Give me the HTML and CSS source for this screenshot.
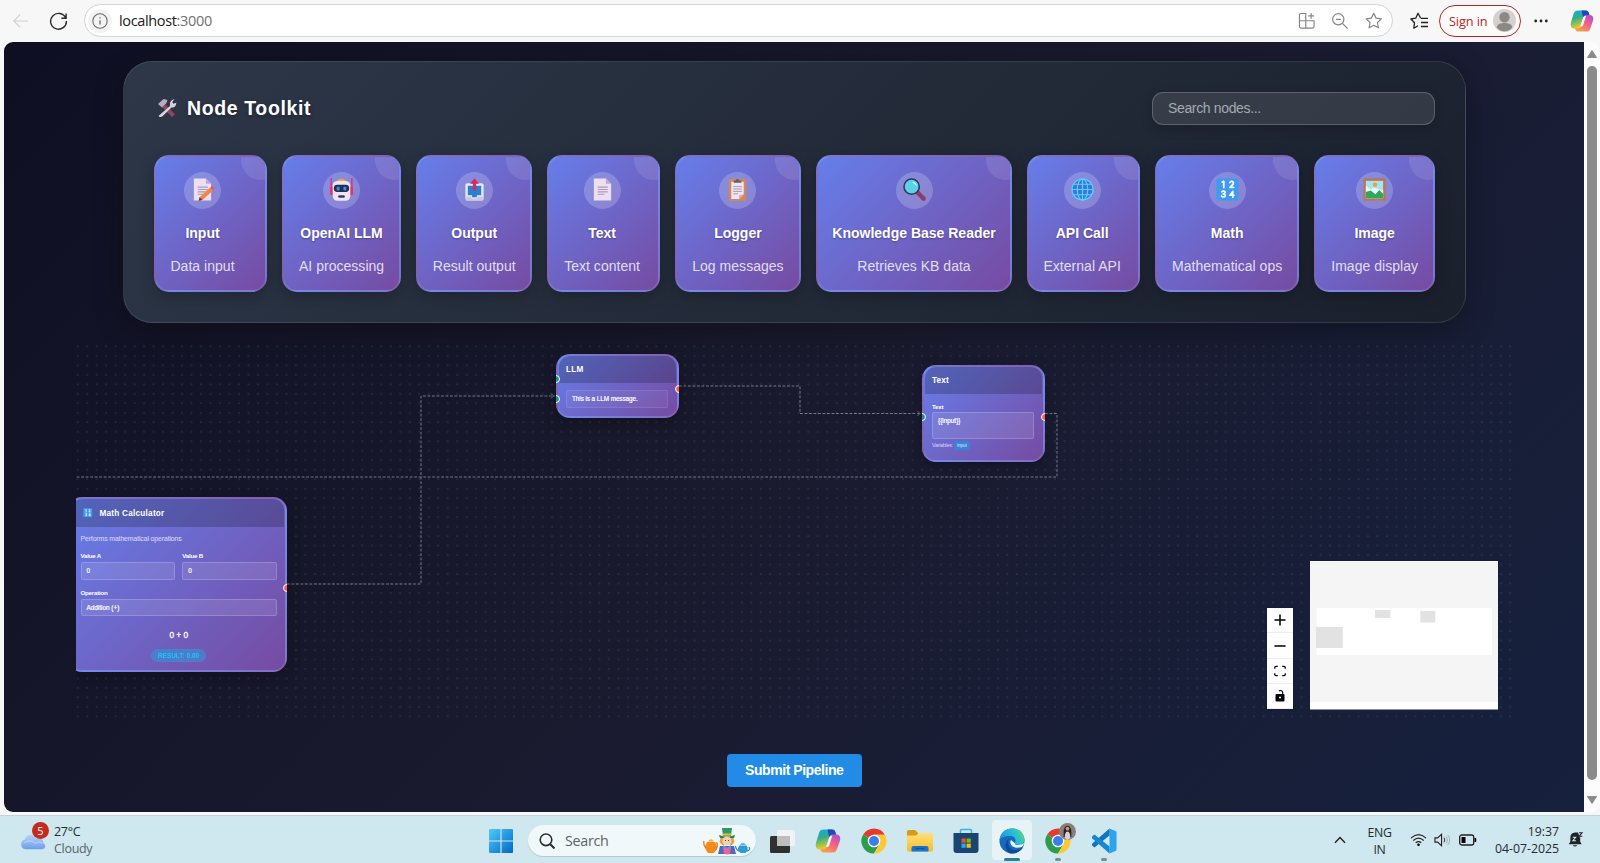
FILE: index.html
```html
<!DOCTYPE html>
<html lang="en">
<head>
<meta charset="utf-8">
<title>Node Toolkit</title>
<link rel="stylesheet" href="styles.css">
</head>
<body>
<svg class="defs" width="0" height="0" aria-hidden="true">
  <defs>
    <linearGradient id="cpA" x1="0" y1="0" x2="0.3" y2="1"><stop offset="0" stop-color="#1aa7e8"/><stop offset=".45" stop-color="#2fae8c"/><stop offset="1" stop-color="#f2cf1d"/></linearGradient>
    <linearGradient id="cpB" x1="1" y1="0" x2="0.4" y2="1"><stop offset="0" stop-color="#a24de0"/><stop offset=".5" stop-color="#ee5d8b"/><stop offset="1" stop-color="#fb9a4b"/></linearGradient>
    <linearGradient id="win" x1="0" y1="0" x2="1" y2="1"><stop offset="0" stop-color="#4fcbf8"/><stop offset="1" stop-color="#0067c5"/></linearGradient>
    <linearGradient id="edgeA" x1="0" y1="0.3" x2="1" y2="0"><stop offset="0" stop-color="#1c9be6"/><stop offset=".6" stop-color="#2cc3cf"/><stop offset="1" stop-color="#6fdc4e"/></linearGradient>
    <linearGradient id="fold" x1="0" y1="0" x2="0" y2="1"><stop offset="0" stop-color="#ffe07a"/><stop offset="1" stop-color="#f7bd2d"/></linearGradient>
    <linearGradient id="cloud" x1="0" y1="0" x2="0" y2="1"><stop offset="0" stop-color="#b9d3fb"/><stop offset="1" stop-color="#6f9ee8"/></linearGradient>
    <symbol id="copilot" viewBox="0 0 26 26">
      <path d="M8.500 1.500H17c2 0 3 1 3.500 3l.8 3h-4c-1.800 0-2.800 1-3.300 2.800L11 19c-.5 1.600-1.400 2.400-3 2.400H5C1.500 21.400.2 18.500 1 15L4 5C4.900 2.500 6 1.500 8.500 1.500z" fill="url(#cpA)"/>
      <path d="M12.500 1.500H17c2 0 3 1 3.500 3l.8 3h-4c-1.500 0-2.400.7-3 2z" fill="#1b49c4"/>
      <path d="M17.500 24.500H9c-2 0-3-1-3.500-3l-.2-.600H8.500c1.800 0 2.500-.8 3-2.400L15 8c.5-1.300 1.400-1.600 3-1.600h3c3.500 0 4.800 2.600 4 6L22 21c-.9 2.500-2 3.500-4.500 3.500z" fill="url(#cpB)"/>
      <path d="M14.300 9.200q.4-1.200 1.500-1.500h1.500l-3 9.500q-.5 1.500-1.700 1.700h-1.400z" fill="#f3f5f8"/>
    </symbol>
    <symbol id="chrome" viewBox="0 0 26 26">
      <path d="M13 13L2.200 6.500A12.500 12.500 0 0 1 23.800 6.700H13z" fill="#e33b2e"/>
      <path d="M13 13l5.500 3.200L13 25.500A12.500 12.500 0 0 1 2.200 6.500z" fill="#2d9c4b"/>
      <path d="M13 6.700h10.800A12.500 12.500 0 0 1 13 25.500l5.500-9.300z" fill="#fcc934"/>
      <circle cx="13" cy="13" r="6.300" fill="#fff"/><circle cx="13" cy="13" r="5" fill="#3b7ded"/>
    </symbol>
    <symbol id="numbers" viewBox="0 0 24 24">
      <rect x=".5" y=".5" width="23" height="23" rx="3" fill="#3d9bf0"/>
      <g fill="none" stroke="#fff" stroke-width="1.800" stroke-linecap="round" stroke-linejoin="round">
        <path d="M6.500 4.500l1.600-1v6.500M14.500 4.800c.5-2 4-1.700 3.700.5-.2 1.600-2.600 3-3.700 4.500h4M6 14.500c1-1.500 3.700-1 3.500.6-.1 1-1 1.400-2 1.400 1.300 0 2.300.6 2.200 1.800-.2 1.800-3 2-3.900.5M17.500 20V14L14.500 18h4.300"/>
      </g>
    </symbol>
    <symbol id="page" viewBox="0 0 24 24">
      <path d="M3 .5h12.500l5.500 5.500V23.500H3z" fill="#ecdff2"/><path d="M15.500.5V6H21z" fill="#bfa9d2"/>
      <path d="M7 9.500h10.500M7 12h10.500M7 14.500h10.500M7 17h7" stroke="#a99bb9" stroke-width="1.100"/>
    </symbol>
  </defs>
</svg>

<header class="browser">
  <svg class="nav-icon" viewBox="0 0 20 20"><path d="M18 10H2.500M9 3L2 10l7 7" fill="none" stroke="#cfcfcf" stroke-width="1.300"/></svg>
  <svg class="nav-icon reload" viewBox="0 0 20 20"><path d="M17.600 7.500A8.300 8.300 0 1 0 18.300 10.500M18 2.500v5.200h-5" fill="none" stroke="#2b2b2b" stroke-width="1.500"/></svg>
  <div class="url">
    <span class="info"><svg viewBox="0 0 16 16"><circle cx="8" cy="8" r="7.200" fill="none" stroke="#6b6b6b" stroke-width="1.100"/><path d="M8 7.200v4.300M8 4.300v1.300" stroke="#6b6b6b" stroke-width="1.300"/></svg></span>
    <span class="address">localhost<span class="port">:3000</span></span>
    <span class="url-tools">
      <svg viewBox="0 0 18 18"><path d="M8 16.500V1.500H3a1.500 1.500 0 0 0-1.500 1.500v12A1.500 1.500 0 0 0 3 16.500h12a1.500 1.500 0 0 0 1.500-1.500V9H1.500M13.500 1v6M10.500 4h6" fill="none" stroke="#858585" stroke-width="1.200"/></svg>
      <svg viewBox="0 0 18 18"><circle cx="7.500" cy="7.500" r="5.800" fill="none" stroke="#858585" stroke-width="1.200"/><path d="M5 7.500h5M12 12l5 5" stroke="#858585" stroke-width="1.200"/></svg>
      <svg viewBox="0 0 18 18"><path d="M9 1.300l2.400 5 5.400.7-4 3.800 1 5.500L9 13.700l-4.800 2.600 1-5.500-4-3.800 5.400-.7z" fill="none" stroke="#858585" stroke-width="1.200" stroke-linejoin="round"/></svg>
    </span>
  </div>
  <svg class="favs" viewBox="0 0 18 18"><path d="M10.700 6.300L8 1.200 5.700 6.200.9 7l3.600 3.800-.7 5.400 4.200-2.400M11 6.300h7M11 10.500h7M11 14.500h7" fill="none" stroke="#222" stroke-width="1.300" stroke-linejoin="round"/></svg>
  <div class="signin"><span>Sign in</span>
    <svg viewBox="0 0 24 24"><circle cx="12" cy="12" r="12" fill="#d4d0cd"/><circle cx="12" cy="8.600" r="5.400" fill="#8b8885"/><path d="M3.800 19c1-3.500 4.500-4.300 8.200-4.300s7.200.8 8.200 4.300c-1.800 2.600-5 4.300-8.200 4.300S5.600 21.600 3.800 19z" fill="#8b8885"/></svg>
  </div>
  <svg class="more" viewBox="0 0 14 4"><g fill="#222"><circle cx="1.700" cy="2" r="1.400"/><circle cx="7" cy="2" r="1.400"/><circle cx="12.300" cy="2" r="1.400"/></g></svg>
  <svg class="side-copilot"><use href="#copilot"/></svg>
</header>

<div class="viewport">
  <main class="app">
    <section class="toolkit">
      <div class="toolkit-head">
        <h1><svg viewBox="0 0 20 20"><path d="M5 9l10 10 3-2.700L8.500 6.500z" fill="#8f4658"/><path d="M1 6l5.500-5 4 1-1.200 3.300L5 9.500z" fill="#b7abc2"/><path d="M2 17.500L13.200 7.800c-.8-3 .6-6 4.200-6.500L15.300 4l1 1.800 3-1c.1 3.500-2.300 5.200-4.800 4.700L5.500 18.300c-1.600 1.500-4.600.6-3.500-.8z" fill="#dccfe3"/></svg>Node Toolkit</h1>
        <div class="search">Search nodes...</div>
      </div>
      <div class="cards">
        <article class="card card-input"><div class="card-in"><span class="disc"><svg viewBox="0 0 24 24"><use href="#page"/><path d="M9 20L20 9.800l3 3L12 23l-4 .7z" fill="#f5843c"/><path d="M20 9.800l2-1.300 2 2.300-1 2z" fill="#e8525f"/><path d="M8 23.700L9 20l3 3z" fill="#5a3a44"/></svg></span><h2>Input</h2><p>Data input</p></div></article>
        <article class="card"><div class="card-in"><span class="disc"><svg viewBox="0 0 24 24"><path d="M1.200 0v16M22.800 0v16" stroke="#d63671" stroke-width="1.500"/><rect x="0" y="9" width="4" height="9" rx="1.500" fill="#e2326f"/><rect x="20" y="9" width="4" height="9" rx="1.500" fill="#e2326f"/><path d="M7 4.500c0-5 10-5 10 0z" fill="#f3a73a"/><rect x="2.800" y="3" width="18.400" height="20.800" rx="5" fill="#efe3f6"/><rect x="4" y="7" width="16" height="7.500" rx="3.500" fill="#233052"/><rect x="7" y="9" width="3" height="4" rx="1" fill="#398ee8"/><rect x="14" y="9" width="3" height="4" rx="1" fill="#398ee8"/><rect x="8.500" y="18" width="7" height="2.600" rx="1.300" fill="#49334e"/></svg></span><h2>OpenAI LLM</h2><p>AI processing</p></div></article>
        <article class="card"><div class="card-in"><span class="disc"><svg viewBox="0 0 24 24"><rect x="2.500" y="5.500" width="19" height="18" rx="2" fill="#e5eaf8"/><path d="M5 8h14v10h-4.500v2h-5v-2H5z" fill="#2c80d0"/><path d="M3 19.500h6v2h6v-2h6v4H3z" fill="#cfc7dc"/><path d="M12 .2L7.300 6h3v7h3.400V6h3z" fill="#d92a5e"/></svg></span><h2>Output</h2><p>Result output</p></div></article>
        <article class="card"><div class="card-in"><span class="disc"><svg><use href="#page"/></svg></span><h2>Text</h2><p>Text content</p></div></article>
        <article class="card"><div class="card-in"><span class="disc"><svg viewBox="0 0 24 24"><rect x="3" y="1" width="18" height="22.800" rx="1" fill="#d48855"/><path d="M5.500 4h13v13l-5 5h-8z" fill="#eee4f2"/><path d="M13.500 22v-4l5-1z" fill="#c6b3d3"/><path d="M8 5V2.500h2.500c0-2 3-2 3 0H16V5z" fill="#665d6d"/><path d="M7.500 9h9M7.500 11.500h9M7.500 14h9M7.500 16.500h5" stroke="#a598b3" stroke-width="1"/></svg></span><h2>Logger</h2><p>Log messages</p></div></article>
        <article class="card"><div class="card-in"><span class="disc"><svg viewBox="0 0 24 24"><path d="M14.500 14.500L21.500 21.500" stroke="#8b3d69" stroke-width="4.500" stroke-linecap="round"/><circle cx="9" cy="9" r="8" fill="#5cd0e7" stroke="#313657" stroke-width="1.600"/><path d="M10 4.500c2 .2 3.500 1.600 4 3.500" stroke="#c2f4fb" stroke-width="1.300" fill="none"/></svg></span><h2>Knowledge Base Reader</h2><p>Retrieves KB data</p></div></article>
        <article class="card"><div class="card-in"><span class="disc"><svg viewBox="0 0 24 24"><circle cx="12" cy="12" r="11" fill="#3579df"/><g fill="none" stroke="#5fd0f5" stroke-width="1.200"><circle cx="12" cy="12" r="11"/><ellipse cx="12" cy="12" rx="5.500" ry="11"/><path d="M12 1v22M1 12h22M3 6.500h18M3 17.500h18"/></g></svg></span><h2>API Call</h2><p>External API</p></div></article>
        <article class="card"><div class="card-in"><span class="disc"><svg><use href="#numbers"/></svg></span><h2>Math</h2><p>Mathematical ops</p></div></article>
        <article class="card"><div class="card-in"><span class="disc"><svg viewBox="0 0 24 24"><rect x=".3" y=".3" width="23.400" height="23.400" fill="#b97758"/><rect x="3" y="3" width="18" height="18" fill="#a2e4f2"/><path d="M3 8l5 4 3-2 10 3V21H3z" fill="#eaf5f5"/><path d="M3 14.500l5-1.500 5 4 4-4.500 4 4V21H3z" fill="#31a65c"/><circle cx="12.500" cy="7" r="2.400" fill="#eea037"/></svg></span><h2>Image</h2><p>Image display</p></div></article>
      </div>
    </section>

    <section class="flow">
      <svg class="edges" viewBox="76 342 1436 376">
        <defs><pattern id="dots" x="72.950" y="341.570" width="9.487" height="9.487" patternUnits="userSpaceOnUse"><circle cx="4.740" cy="4.740" r=".55" fill="#81818f" opacity=".65"/></pattern></defs>
        <rect x="76" y="342" width="1436" height="376" fill="url(#dots)"/>
        <g class="wire">
          <path d="M287 584H421V396H555"/><path d="M679 386H800V413.500H921"/><path d="M1045 413.500H1057V477H76"/>
        </g>
        <path class="tip" d="M551 393.500l2.500 2.500-2.500 2.500M917.500 411l2.500 2.500-2.500 2.500"/>
      </svg>

      <div class="node llm"><div class="node-head">LLM</div><div class="node-body"><div class="field message">This is a LLM message.</div></div>
        <i class="handle in h1"></i><i class="handle in h2"></i><i class="handle out h3"></i></div>

      <div class="node text"><div class="node-head">Text</div><div class="node-body"><label>Text</label><div class="field area">{{input}}</div><div class="vars">Variables: <span>input</span></div></div>
        <i class="handle in h4"></i><i class="handle out h4"></i></div>

      <div class="node math"><div class="node-head"><svg><use href="#numbers"/></svg>Math Calculator</div>
        <div class="node-body"><p>Performs mathematical operations</p>
          <div class="pair"><div><label>Value A</label><div class="field">0</div></div><div><label>Value B</label><div class="field">0</div></div></div>
          <label class="op">Operation</label><div class="field">Addition (+)</div>
          <div class="expr">0 + 0</div><div class="result"><span>RESULT: 0.00</span></div>
        </div><i class="handle out h5"></i></div>

      <div class="controls">
        <span><svg viewBox="0 0 12 12"><path d="M6 .5v11M.5 6h11" stroke="#000" stroke-width="1.500"/></svg></span>
        <span><svg viewBox="0 0 12 12"><path d="M.5 6h11" stroke="#000" stroke-width="1.500"/></svg></span>
        <span><svg viewBox="0 0 12 12"><path d="M.8 3.800V2.500q0-1.200 1.200-1.200h1.800M8.200 1.300H10q1.200 0 1.200 1.200v1.300M11.200 8.200v1.300q0 1.200-1.200 1.200H8.200M3.800 10.700H2Q.8 10.700.8 9.500V8.200" fill="none" stroke="#000" stroke-width="1.300"/></svg></span>
        <span><svg viewBox="0 0 12 12"><path d="M2.500 4h7q1 0 1 1v5.500q0 1-1 1h-7q-1 0-1-1V5q0-1 1-1z"/><path d="M5 1.200c1.500-1.500 3.700-.4 3.700 1.400V4.500" fill="none" stroke="#000" stroke-width="1.100"/><circle cx="6" cy="7.500" r="1" fill="#fff"/></svg></span>
      </div>
      <svg class="minimap" viewBox="1310 561 188 148.500"><path d="M1310 561h188v148.500h-188z" fill="#fff"/><path d="M1310 561.500h188v140.500h-188zM1316.500 608v47H1492v-47z" fill="#f5f5f5" fill-rule="evenodd"/><path d="M1375 610h15.300v8H1375zM1420.300 611h15v11.500h-15zM1316 627h26.700v21H1316z" fill="#e2e2e2"/></svg>
    </section>

    <button class="submit">Submit Pipeline</button>
  </main>
  <div class="scroll"><svg viewBox="0 0 10 8"><path d="M5 .5L9.500 7.500H.5z" fill="#8b8b8b" stroke="#8b8b8b" stroke-linejoin="round"/></svg><span class="thumb"></span><svg viewBox="0 0 10 8"><path d="M5 7.500L.5.500h9z" fill="#8b8b8b" stroke="#8b8b8b" stroke-linejoin="round"/></svg></div>
</div>

<footer class="taskbar">
  <div class="weather"><svg viewBox="0 0 30 28"><path d="M6 26.500a5.500 5.500 0 0 1-.5-10.800C6.500 9 16 8.500 18 14.500c5-1.500 8 1.500 8 5 4 3 1.500 7-2 7z" fill="url(#cloud)"/><path d="M4 20c4-4 10-3 13 0 3-2 6-2 8 0" stroke="#d6e5ff" fill="none" opacity=".7"/></svg><b>5</b>
    <div><div class="temp">27°C</div><div class="sky">Cloudy</div></div></div>
  <svg class="start" viewBox="0 0 24 24"><path d="M0 1q0-1 1-1h10.400v11.400H0zM12.600 0H23q1 0 1 1v10.400H12.600zM0 12.600h11.400V24H1q-1 0-1-1zM12.600 12.600H24V23q0 1-1 1H12.600z" fill="url(#win)"/></svg>
  <div class="task-search">
    <svg class="lens" viewBox="0 0 16 16"><circle cx="7" cy="6.800" r="5.800" fill="none" stroke="#2c2c2c" stroke-width="1.600"/><path d="M11 11l4.500 4.500" stroke="#2c2c2c" stroke-width="2"/></svg><span>Search</span>
    <svg class="hatter" viewBox="0 0 48 28">
      <path d="M4 15h8q4 6-1 11H5Q0 21 4 15z" fill="#f28a1c"/><path d="M5 14.500q3-4.500 6 0z" fill="#fba739"/><path d="M3 21Q0 18 1 14M12.500 23q3-4 1-8" stroke="#e17a14" fill="none" stroke-width="1.300"/>
      <path d="M19 1h10l-1 8h-8z" fill="#2c9a63"/><path d="M16 8q8 3 16 0l-1 3H17z" fill="#227c59"/><path d="M19.500 6.500h9v2h-9z" fill="#e8bd3b"/>
      <path d="M17.500 11h13l1 4-2.500 3H19l-2.500-3z" fill="#e9a33f"/><circle cx="24" cy="14" r="4.500" fill="#f8cfb2"/><path d="M22 13.500h1M25 13.500h1" stroke="#454"/><path d="M15 27l2-8h14l2 8z" fill="#5961c3"/><path d="M20 18l4 3 4-3v5l-4-2-4 2z" fill="#42a7df"/><circle cx="24" cy="24" r="3.500" fill="#ee6491"/>
      <path d="M36.500 18.500h7q3 4-1 7.500h-5q-4.500-3.500-1-7.500z" fill="#2e9bd2"/><path d="M37 18q3-4.500 6 0z" fill="#53b9e6"/><path d="M36 24q-3-1-3.500-5M44 24q4-1 2-4" stroke="#2a8cc4" fill="none" stroke-width="1.300"/>
    </svg>
  </div>
  <div class="apps">
    <span><svg viewBox="0 0 26 26"><rect x="1" y="8" width="20" height="17" rx="1.500" fill="#303030"/><rect x="8" y="2" width="18" height="16" rx="1.500" fill="#f5f5f5" opacity=".85"/><path d="M8 8h13v10H8z" fill="#bdbdbd"/></svg></span>
    <span><svg><use href="#copilot"/></svg></span>
    <span><svg><use href="#chrome"/></svg></span>
    <span><svg viewBox="0 0 26 26"><path d="M0 3.500q0-1.500 1.500-1.500H8l3 3v5H0z" fill="#d99a1a"/><path d="M0 7.500h9l3-2.500h12.500q1.500 0 1.500 1.500V22q0 1.500-1.500 1.500h-23Q0 23.500 0 22z" fill="url(#fold)"/><path d="M4.500 23.500V20q0-2 2-2h13q2 0 2 2v3.500z" fill="#1573c9"/><path d="M8.500 20.500h9" stroke="#0b4f99"/></svg></span>
    <span><svg viewBox="0 0 26 26"><path d="M7.500 6V2.500q0-1 1-1h9q1 0 1 1V6" fill="none" stroke="#37b5e6" stroke-width="1.500"/><path d="M.5 5h25v17q0 3-3 3h-19q-3 0-3-3z" fill="#194573"/><path d="M8.500 10.500h4.200v4.200H8.500z" fill="#f25022"/><path d="M13.600 10.500h4.200v4.200h-4.200z" fill="#7fba00"/><path d="M8.500 15.600h4.200v4.200H8.500z" fill="#29a8ea"/><path d="M13.600 15.600h4.200v4.200h-4.200z" fill="#ffb900"/></svg></span>
    <span class="active"><svg viewBox="0 0 26 26"><circle cx="13" cy="13" r="12.500" fill="#1769bd"/><path d="M.5 12.500C1.500 4 7 .5 13 .5c8 0 12.500 5.500 12.500 10.500 0 4-3 6-6 6-2.500 0-4.500-1-3.500-2.500 2-3-1-6.500-5-6.500-5 0-9 1-10.500 4.500z" fill="url(#edgeA)"/><path d="M10.500 10.500c-3 4-1 11 5.500 11.500 3.500.2 6-1.300 7.500-2.800l.5.300c-2 3.500-6 6-10.500 6C5 25.500 4.500 13 10.500 10.500z" fill="#0e4c98"/><path d="M12 12c-2 3 .5 7.500 6 7.700 2 .1 4-.4 5.500-1.200l2.500-4.500c-2 3-10.500 4.500-10 1.300z" fill="#e7f3f7"/></svg><em class="wide"></em></span>
    <span><svg><use href="#chrome"/></svg><svg class="avatar" viewBox="0 0 18 18"><circle cx="9" cy="9" r="9" fill="#85817a"/><path d="M5 15q-1-12 4-12t4 12z" fill="#2b2220"/><circle cx="9" cy="6" r="2" fill="#c79a80"/><path d="M6 16q0-7 3-7t3 7l-3 2z" fill="#d7d0d6"/></svg><em></em></span>
    <span><svg viewBox="0 0 26 26"><path d="M18.500.5L25.500 3.500v19l-7 3z" fill="#2ba4ec"/><path d="M18.500.5v7L3.500 19.500 1 17.500v-1.700z" fill="#1275bb"/><path d="M18.500 25.500v-7L3.500 6.500 1 8.500v1.700z" fill="#1786d3"/></svg><em></em></span>
  </div>
  <div class="tray">
    <svg class="chev" viewBox="0 0 12 8"><path d="M1 6.800L6 1.500l5 5.300" fill="none" stroke="#222" stroke-width="1.400"/></svg>
    <div class="lang">ENG<br>IN</div>
    <svg class="wifi" viewBox="0 0 18 14"><g fill="none" stroke="#222" stroke-width="1.200"><path d="M1 5q8-7.500 16 0M3.500 7.500q5.500-5 11 0M6 10q3-2.700 6 0"/></g><circle cx="9" cy="12" r="1.400"/></svg>
    <svg class="vol" viewBox="0 0 18 14"><path d="M1 4.800h2.800L8 1v12L3.800 9.200H1z" fill="none" stroke="#222" stroke-width="1.200"/><path d="M10.500 4.500q2 2.500 0 5" fill="none" stroke="#222"/><path d="M12.500 3q3.500 4 0 8M14.500 1.500q4.500 5.500 0 11" fill="none" stroke="#9cb0b5"/></svg>
    <svg class="bat" viewBox="0 0 18 12"><rect x=".7" y="1" width="14" height="10" rx="2" fill="none" stroke="#222" stroke-width="1.300"/><path d="M2.500 3h4v6h-4zM15.500 4h1.700v4h-1.700z"/></svg>
    <div class="clock">19:37<br>04-07-2025</div>
    <svg class="bell" viewBox="0 0 16 17"><path d="M.8 13.500L2.500 10.500V6.500q0-5 5-5.500h5.500v9.500l1.500 3zM5 14.500h5q-2.500 3-5 0z" fill="#1c2427"/><path d="M5 6h3.200L5.200 9.800h3.300" fill="none" stroke="#cfe7ee" stroke-width="1.100"/><path d="M10.500.3H16v6h-3.500z" fill="#cfe7ee"/><path d="M11.800 1.200h3.300L12 5h3.300" fill="none" stroke="#222" stroke-width="1.100"/></svg>
  </div>
</footer>
</body>
</html>
```
FILE: styles.css
```css
* { box-sizing: border-box; }
body { margin: 0; width: 1600px; height: 863px; overflow: hidden; display: flex; flex-direction: column; background: #f7f7f7; font-family: "Liberation Sans", Arial, sans-serif; }
svg { display: block; flex: none; }
.defs { position: absolute; }
h1, h2, p { margin: 0; }

/* browser toolbar */
.browser { height: 42px; flex: none; display: flex; align-items: center; padding: 0 6px 1px 11px; font-family: "Open Sans", "Noto Sans", sans-serif; }
.nav-icon { width: 20px; height: 18px; }
.reload { width: 19px; height: 19px; margin: 0 25px 0 18px; }
.url { width: 1309px; margin-left: -9px; height: 33px; border: 1px solid #d4d4d4; border-radius: 17px; background: #fff; display: flex; align-items: center; padding: 0 10px 0 3px; }
.info { width: 24px; height: 24px; border-radius: 50%; background: #f3f3f3; display: grid; place-items: center; }
.info svg { width: 16px; height: 16px; }
.address { margin-left: 7px; font-size: 14.500px; letter-spacing: -.35px; color: #202020; flex: 1; }
.port { color: #717171; }
.url-tools { display: flex; gap: 16px; }
.url-tools svg { width: 17.500px; height: 17.500px; }
.favs { width: 18px; height: 18px; margin-left: 17px; }
.signin { width: 82px; height: 32px; margin-left: 11px; border: 1.500px solid #b3262c; border-radius: 16px; display: flex; align-items: center; justify-content: space-between; padding: 0 4px 0 9px; color: #b3262c; font-size: 12.700px; background: #fdfafa; letter-spacing: -.1px; }
.signin svg { width: 23px; height: 23px; }
.more { width: 14px; height: 4px; margin-left: 13px; }
.side-copilot { width: 24px; height: 24px; margin-left: 22px; }

/* page area */
.viewport { height: 770px; flex: none; margin-left: 4px; display: flex; }
.app { width: 1580px; border-radius: 9px 0 0 9px; background: linear-gradient(135deg, #0f0f23 0%, #1a1a2e 50%, #16213e 100%); display: flex; flex-direction: column; padding-top: 19px; overflow: hidden; }
.scroll { width: 16px; background: #fcfcfc; border-radius: 0 9px 9px 0; display: flex; flex-direction: column; align-items: center; padding: 8px 0; }
.scroll svg { width: 10px; height: 8px; }
.thumb { width: 9.500px; height: 714px; border-radius: 5px; background: #8b8b8b; margin: 8px 0 16px; }

/* toolkit */
.toolkit { width: 1343px; height: 262px; margin-left: 119px; flex: none; border: 1px solid rgba(255,255,255,.1); border-radius: 29px; background: linear-gradient(135deg, #2d3748 0%, #1a202c 100%); box-shadow: 0 8px 30px rgba(0,0,0,.3); padding: 30px 30px 0; }
.toolkit-head { display: flex; justify-content: space-between; align-items: center; height: 33px; margin-bottom: 30px; }
.toolkit h1 { display: flex; align-items: center; gap: 10px; padding-left: 3px; font-size: 19.500px; letter-spacing: .62px; color: #fff; text-shadow: 0 2px 4px rgba(0,0,0,.3); line-height: 28px; margin-top: -2px; }
.toolkit h1 svg { width: 20px; height: 20px; }
.search { width: 283px; height: 33px; border: 1px solid rgba(255,255,255,.2); border-radius: 11px; background: rgba(255,255,255,.1); color: #a5a9b0; font-size: 14px; letter-spacing: -.35px; line-height: 30px; padding-left: 15px; box-shadow: 0 4px 12px rgba(0,0,0,.18); }
.cards { display: grid; grid-template-columns: 112.800px 119.500px 115.800px 113px 125.700px 196.500px 112.800px 144.200px 120.700px; column-gap: 15px; }
.card { height: 137px; position: relative; overflow: hidden; border: 2px solid rgba(255,255,255,.1); border-radius: 15px; background: linear-gradient(135deg, #667eea 0%, #764ba2 100%); box-shadow: 0 4px 15px rgba(0,0,0,.25); padding-top: 15px; }
.card::after { content: ""; position: absolute; top: -17px; right: -16px; width: 40px; height: 40px; border-radius: 50%; background: rgba(255,255,255,.1); }
.card-in { display: flex; flex-direction: column; align-items: center; white-space: nowrap; }
.card:nth-child(4) .card-in, .card:nth-child(7) .card-in { margin-left: -3px; }
.card-input .card-in { width: 64px; margin-left: 14.500px; }
.disc { width: 37px; height: 37px; border-radius: 50%; background: rgba(255,255,255,.2); display: grid; place-items: center; margin-bottom: 15px; padding-bottom: 2px; }
.disc svg { width: 23px; height: 23px; }
.card h2 { font-size: 14px; line-height: 18px; letter-spacing: 0; color: #fff; text-shadow: 0 1px 2px rgba(0,0,0,.3); margin-bottom: 15px; }
.card p { font-size: 14px; line-height: 18px; color: rgba(255,255,255,.8); letter-spacing: .03px; }

/* flow canvas */
.flow { position: relative; width: 1436px; height: 376px; margin: 19px 0 0 72px; flex: none; overflow: hidden; }
.edges { width: 1436px; height: 376px; }
.wire path { fill: none; stroke: #858592; stroke-width: .9; stroke-dasharray: 2.800 1.700; }
.tip { fill: none; stroke: #858592; stroke-width: .8; }
.node { position: absolute; border: 2px solid rgba(255,255,255,.1); border-radius: 14px; background: linear-gradient(135deg, #667eea 0%, #764ba2 100%); box-shadow: 0 4px 14px rgba(0,0,0,.3); color: #fff; }
.node-head { display: flex; align-items: center; background: rgba(0,0,0,.2); border-radius: 11px 11px 0 0; font-weight: bold; font-size: 8.200px; letter-spacing: .2px; height: 27px; padding-left: 7px; margin: 0 1px; }
.node-body { padding: 0 9px 0 8px; font-size: 6.400px; }
.node label { display: block; font-weight: bold; font-size: 6.200px; line-height: 8px; letter-spacing: -.25px; }
.field { border: .8px solid rgba(255,255,255,.18); border-radius: 2px; background: rgba(255,255,255,.1); padding-left: 5px; height: 18px; line-height: 16px; font-size: 6.400px; -webkit-text-stroke: .2px #fff; }
.llm { left: 480px; top: 12px; width: 123px; height: 64px; }
.message { margin-top: 7px; background: rgba(255,255,255,.05); border-color: rgba(255,255,255,.1); letter-spacing: -.08px; }
.text { left: 846px; top: 23px; width: 123px; height: 97px; }
.text label { margin-top: 9px; }
.area { height: 27px; line-height: 15px; margin-top: 1px; }
.vars { font-size: 5.400px; margin-top: 2px; color: #d7d2f4; letter-spacing: -.28px; }
.vars span { display: inline-block; background: #3f80d6; border-radius: 2px; padding: 2px 3px; color: #d9efff; font-size: 4.500px; letter-spacing: 0; }
.math { left: -8px; top: 155px; width: 219px; height: 175px; }
.math .node-head { padding-left: 12px; gap: 7px; height: 28px; letter-spacing: .24px; }
.math .node-head svg { width: 9.500px; height: 9.500px; }
.math .node-body { padding: 0 8px 0 10.500px; }
.math p { font-size: 6.900px; line-height: 8px; margin-top: 8px; color: #d5d2f5; letter-spacing: -.12px; -webkit-text-stroke: .1px #d5d2f5; }
.pair { display: grid; grid-template-columns: 1fr 1fr; gap: 7px; margin: 9px 0 9px; }
.pair .field { margin-top: 2px; }
.op + .field { margin-top: 2px; height: 17px; line-height: 15px; }
.expr { text-align: center; font-size: 8.300px; line-height: 10px; margin-top: 14px; -webkit-text-stroke: .3px #fff; }
.result { display: flex; justify-content: center; margin-top: 9px; }
.result span { border: .8px solid #4186cf; border-radius: 7px; background: rgba(64,140,210,.65); color: #0bc8f4; font-weight: bold; font-size: 6.500px; line-height: 11px; padding: 0 6px; }
.handle { position: absolute; width: 8px; height: 8px; border-radius: 50%; border: 1.500px solid #fff; }
.in { left: -6px; background: #15918b; clip-path: inset(0 0 0 50%); }
.out { right: -6px; background: #f06059; clip-path: inset(0 50% 0 0); }
.h1 { top: 19px; } .h2 { top: 39px; } .h3 { top: 29px; } .h4 { top: 46px; } .h5 { top: 85px; }
.controls { position: absolute; left: 1191px; top: 266px; width: 25.700px; box-shadow: 0 0 2px rgba(0,0,0,.1); }
.controls span { display: grid; place-items: center; height: 25.350px; background: #fefefe; border-bottom: 1px solid #eee; }
.controls svg { width: 12px; height: 12px; }
.minimap { position: absolute; left: 1234px; top: 219px; width: 188px; height: 148.500px; }
.submit { align-self: flex-start; margin: 36px 0 0 723px; width: 134.500px; height: 33px; flex: none; padding: 0 0 1px; border: 0; border-radius: 4px; background: #228be6; color: #fff; font: bold 14px "Liberation Sans", Arial, sans-serif; letter-spacing: -.45px; }

/* taskbar */
.taskbar { height: 48px; flex: none; margin-top: 3px; border-top: 1px solid #c5d3d8; background: #cfe7ee; display: flex; align-items: center; font-family: "Open Sans", "Noto Sans", sans-serif; color: #232b2e; }
.weather { width: 489px; display: flex; padding-left: 20px; align-items: center; position: relative; }
.weather svg { width: 27px; height: 26px; margin: -4px 7px 0 0; }
.weather b { position: absolute; left: 32px; top: -1px; width: 17px; height: 17px; border-radius: 50%; background: #c42b1c; color: #fff; font-size: 11px; font-weight: 400; line-height: 17px; text-align: center; }
.temp, .sky { font-size: 12.500px; line-height: 17px; letter-spacing: -.3px; }
.sky { color: #576468; }
.start { width: 24px; height: 24px; margin-top: 3px; }
.task-search { width: 228px; height: 31px; margin: 2px 3px 0 15px; border-radius: 16px; background: #f0f8fa; box-shadow: 0 1px 1px #b4c8ce; display: flex; align-items: center; padding: 0 5px 0 11px; font-size: 14.300px; color: #5a6264; }
.task-search span { flex: 1; margin-left: 10px; letter-spacing: -.3px; }
.lens { width: 16px; height: 16px; }
.hatter { width: 48px; height: 28px; }
.apps { display: flex; }
.apps span { width: 46px; height: 48px; display: grid; place-items: center; position: relative; padding-top: 2px; }
.apps svg { width: 26px; height: 26px; }
.active::before { content: ""; position: absolute; inset: 4px 3px; border-radius: 4px; background: #e7f3f7; }
.active svg { position: relative; }
.apps .avatar { position: absolute; left: 24px; top: 7px; width: 17px; height: 17px; }
.apps em { position: absolute; bottom: 3px; left: 20px; width: 6px; height: 3px; border-radius: 2px; background: #7b8b90; }
.apps .wide { left: 15px; width: 16px; background: #2b7f92; }
.tray { margin-left: auto; padding-right: 17px; display: flex; align-items: center; font-size: 12.300px; line-height: 17px; letter-spacing: -.3px; }
.chev { width: 12px; height: 8px; }
.lang { width: 36px; text-align: center; margin: 2px 12.500px 0 16px; }
.wifi { width: 17px; height: 14px; }
.vol { width: 17px; height: 14px; margin-left: 7px; }
.bat { width: 18px; height: 12px; margin-left: 8px; }
.clock { text-align: right; margin-left: 16px; width: 66px; white-space: nowrap; letter-spacing: -.02px; }
.bell { width: 15px; height: 17px; margin-left: 9px; }
```
